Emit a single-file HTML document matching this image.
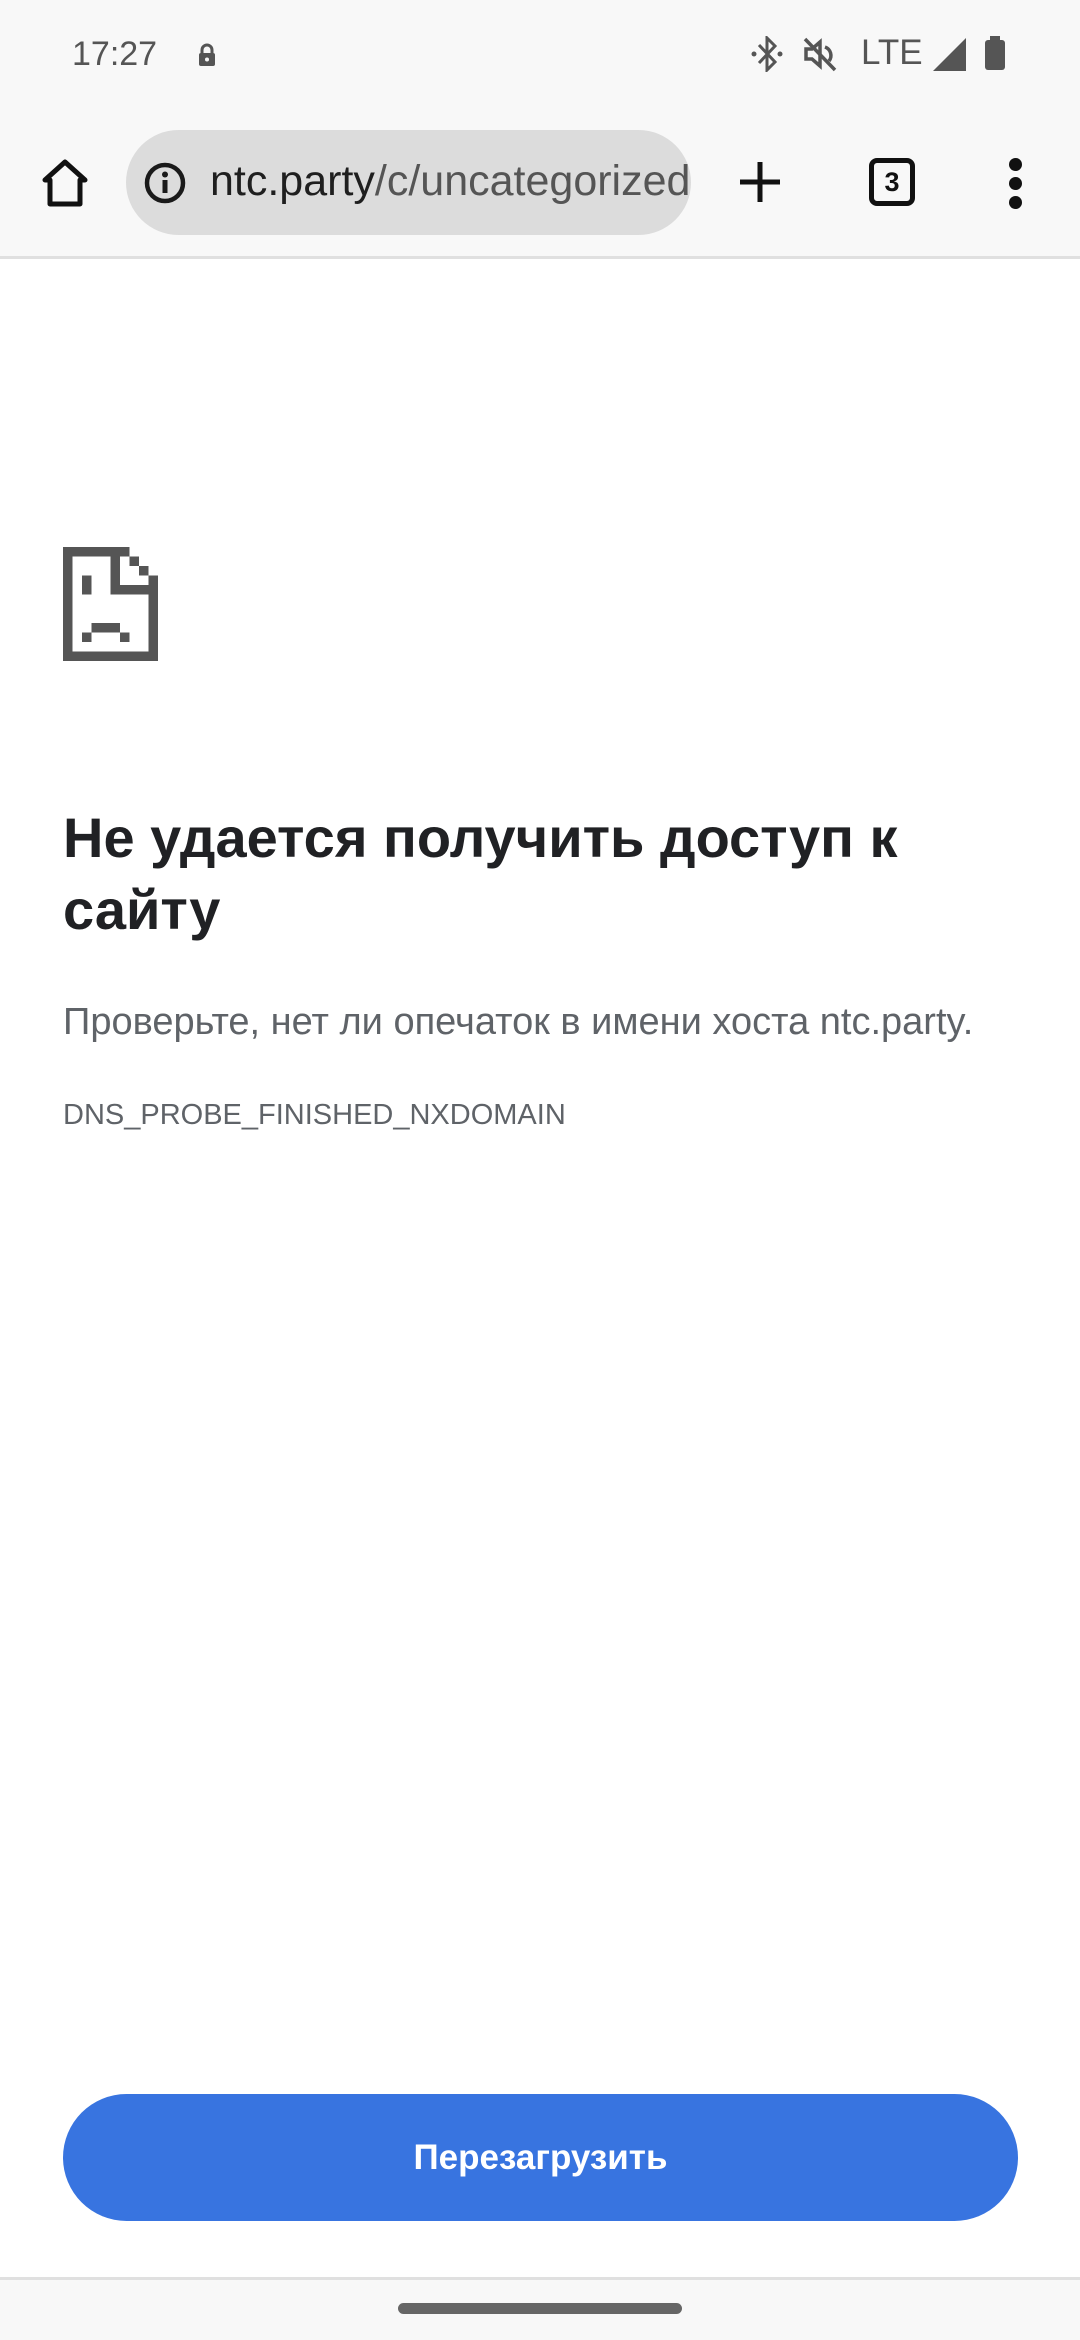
<!DOCTYPE html>
<html><head><meta charset="utf-8"><style>
*{margin:0;padding:0;box-sizing:border-box}
body{width:1080px;height:2340px;background:#fff;font-family:"Liberation Sans",Roboto,sans-serif;position:relative;overflow:hidden}
.abs{position:absolute}
</style></head><body>
<div class="abs" style="left:0;top:0;width:1080px;height:256px;background:#f8f8f8"></div>
<div class="abs" style="left:0;top:256px;width:1080px;height:3px;background:#e0e0e0"></div>
<div class="abs" style="left:72px;top:34px;font-size:34px;color:#555;line-height:40px">17:27</div>
<svg class="abs" style="left:196px;top:42px" width="22" height="26" viewBox="0 0 22 26"><path d="M6 11V8a5 5 0 0 1 10 0v3" fill="none" stroke="#555" stroke-width="3"/><rect x="3" y="11" width="16" height="13" rx="2" fill="#555"/><circle cx="11" cy="17.5" r="2" fill="#f8f8f8"/></svg>
<svg class="abs" style="left:750px;top:36px" width="34" height="36" viewBox="0 0 34 36"><path d="M9 9l16 17-8 8V2l8 8L9 27" fill="none" stroke="#555" stroke-width="3"/><circle cx="4" cy="18" r="2.5" fill="#555"/><circle cx="30" cy="18" r="2.5" fill="#555"/></svg>
<svg class="abs" style="left:802px;top:36px" width="36" height="36" viewBox="0 0 36 36"><path d="M4 13h6l8-7v24l-8-7H4z" fill="none" stroke="#555" stroke-width="3.5"/><path d="M23 11a9 9 0 0 1 4 14" fill="none" stroke="#555" stroke-width="3.5"/><path d="M3 3l30 31" stroke="#555" stroke-width="3.5"/></svg>
<div class="abs" style="left:861px;top:30px;font-size:35px;color:#555;line-height:46px">LTE</div>
<svg class="abs" style="left:933px;top:38px" width="33" height="33"><path d="M33 0V33H0z" fill="#555"/></svg>
<div class="abs" style="left:985px;top:40px;width:20px;height:30px;background:#555;border-radius:3px"></div>
<div class="abs" style="left:990px;top:36px;width:10px;height:5px;background:#555"></div>
<svg class="abs" style="left:38px;top:156px" width="54" height="54" viewBox="0 0 54 54"><path d="M27 6L7 24h5v24h30V24h5z" fill="none" stroke="#111" stroke-width="5" stroke-linejoin="round"/></svg>
<div class="abs" style="left:126px;top:130px;width:565px;height:105px;border-radius:53px;background:#dcdcdc;overflow:hidden">
<svg class="abs" style="left:18px;top:32px" width="42" height="42" viewBox="0 0 42 42"><circle cx="21" cy="21" r="18" fill="none" stroke="#1a1a1a" stroke-width="4.5"/><rect x="18.5" y="18" width="5" height="13" fill="#1a1a1a"/><circle cx="21" cy="12.5" r="3" fill="#1a1a1a"/></svg>
<div class="abs" style="left:84px;top:26px;font-size:43px;line-height:50px;white-space:nowrap;color:#555"><span style="color:#1f1f1f">ntc.party</span>/c/uncategorized</div>
</div>
<svg class="abs" style="left:738px;top:160px" width="44" height="44"><path d="M22 2v40M2 22h40" stroke="#111" stroke-width="5"/></svg>
<div class="abs" style="left:869px;top:158px;width:46px;height:48px;border:5px solid #111;border-radius:8px;font-size:27px;font-weight:bold;color:#111;text-align:center;line-height:38px">3</div>
<div class="abs" style="left:1009px;top:158px;width:13px;height:13px;border-radius:50%;background:#111"></div>
<div class="abs" style="left:1009px;top:177px;width:13px;height:13px;border-radius:50%;background:#111"></div>
<div class="abs" style="left:1009px;top:196px;width:13px;height:13px;border-radius:50%;background:#111"></div>

<svg class="abs" style="left:63px;top:546px" width="95" height="116" viewBox="0 0 10 12" shape-rendering="crispEdges" fill="#555">
<rect x="0" y="0" width="1" height="12"/><rect x="0" y="0" width="7" height="1"/><rect x="7" y="1" width="1" height="1"/><rect x="8" y="2" width="1" height="1"/><rect x="9" y="3" width="1" height="9"/><rect x="0" y="11" width="10" height="1"/><rect x="5" y="0" width="1" height="5"/><rect x="5" y="4" width="5" height="1"/><rect x="2" y="3" width="1" height="2"/><rect x="3" y="8" width="3" height="1"/><rect x="2" y="9" width="1" height="1"/><rect x="6" y="9" width="1" height="1"/>
</svg>
<div class="abs" style="left:63px;top:802px;font-size:56px;font-weight:bold;color:#202124;line-height:72px;width:940px">Не удается получить доступ к сайту</div>
<div class="abs" style="left:63px;top:1000px;font-size:38px;color:#5f6368;line-height:44px;white-space:nowrap">Проверьте, нет ли опечаток в имени хоста ntc.party.</div>
<div class="abs" style="left:63px;top:1097px;font-size:29px;color:#5f6368;line-height:36px">DNS_PROBE_FINISHED_NXDOMAIN</div>
<div class="abs" style="left:63px;top:2094px;width:955px;height:127px;border-radius:64px;background:#3874e0;color:#fff;font-size:35px;font-weight:bold;text-align:center;line-height:127px">Перезагрузить</div>
<div class="abs" style="left:0;top:2277px;width:1080px;height:3px;background:#e0e0e0"></div>
<div class="abs" style="left:0;top:2280px;width:1080px;height:60px;background:#f8f8f8"></div>
<div class="abs" style="left:398px;top:2303px;width:284px;height:11px;border-radius:6px;background:#666"></div>
</body></html>
